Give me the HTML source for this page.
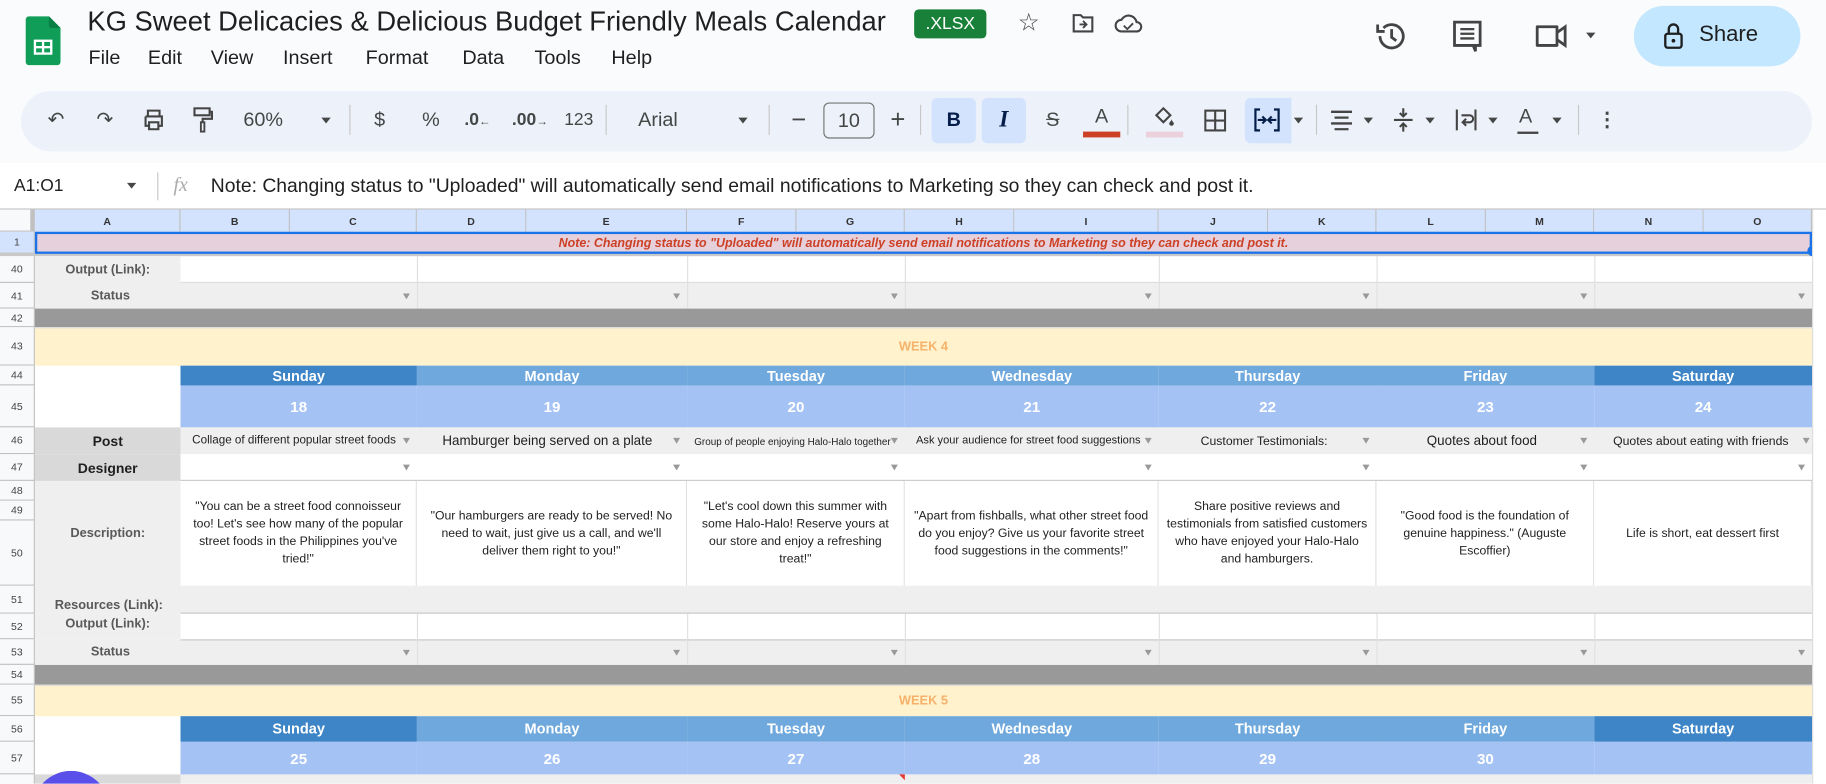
<!DOCTYPE html>
<html><head><meta charset="utf-8">
<style>
*{margin:0;padding:0;box-sizing:border-box}
html,body{width:1826px;height:784px;overflow:hidden;background:#f9fbfd}
#w{position:absolute;left:0;top:0;width:1568px;height:673px;overflow:hidden;transform:scale(1.16454);transform-origin:0 0;font-family:"Liberation Sans",Arial,sans-serif;color:#1f1f1f}
.a{position:absolute}
.t{position:absolute;white-space:nowrap}
.m{font-size:17px;top:40px}
.tb{position:absolute;top:103px;transform:translate(-50%,-50%);font-size:17px;color:#444746;white-space:nowrap}
.sep{position:absolute;top:90px;width:1px;height:26px;background:#c7c7c7}
.dd{position:absolute;width:0;height:0;border-left:4px solid transparent;border-right:4px solid transparent;border-top:5px solid #444746}
.rn{position:absolute;left:0;width:30px;font-size:9px;color:#444;text-align:center;border-bottom:1px solid #c0c0c0;border-right:1px solid #c0c0c0;background:#f8f9fa;display:flex;align-items:center;justify-content:center}
.ch{position:absolute;top:180px;height:19px;font-size:9px;font-weight:bold;color:#333;background:#d3e3fd;border-right:1px solid #c0c0c0;display:flex;align-items:center;justify-content:center}
.c{position:absolute;display:flex;align-items:center;justify-content:center;text-align:center;overflow:hidden}
.lab{font-size:11px;font-weight:bold;color:#595959;background:#efefef}
.ar{position:absolute;width:0;height:0;border-left:3px solid transparent;border-right:3px solid transparent;border-top:5px solid #999}
.day{color:#fff;font-weight:bold;font-size:12.5px}
.num{color:#fff;font-weight:bold;font-size:13px;background:#a4c2f4}
.desc{font-size:10.5px;line-height:15px;color:#222;background:#fff;padding:0 6px;border-right:1px solid #e0e0e0}
</style></head><body><div id="w">
<svg class="a" style="left:22px;top:14px" width="30" height="42" viewBox="0 0 30 42"><path d="M3 0h17l10 10v29a3 3 0 0 1-3 3H3a3 3 0 0 1-3-3V3a3 3 0 0 1 3-3z" fill="#0f9d58"/><path d="M20 0l10 10H22a2 2 0 0 1-2-2z" fill="#087f43"/><rect x="7" y="20" width="16" height="13" fill="#fff"/><rect x="9" y="22" width="5" height="3.5" fill="#0f9d58"/><rect x="16" y="22" width="5" height="3.5" fill="#0f9d58"/><rect x="9" y="27.5" width="5" height="3.5" fill="#0f9d58"/><rect x="16" y="27.5" width="5" height="3.5" fill="#0f9d58"/></svg>
<div class="t" style="left:75px;top:5px;font-size:23.5px;color:#1f1f1f">KG Sweet Delicacies &amp; Delicious Budget Friendly Meals Calendar</div>
<div class="a" style="left:785px;top:8px;width:62px;height:25px;background:#188038;border-radius:4px;color:#fff;font-size:15px;display:flex;align-items:center;justify-content:center">.XLSX</div>
<div class="t" style="left:874px;top:7px;font-size:21px;color:#444">☆</div>
<svg class="a" style="left:920px;top:11px" width="20" height="18" viewBox="0 0 20 18"><path d="M2 2h6l2 2h8v12H2z" fill="none" stroke="#444" stroke-width="1.8"/><path d="M7 10h6M10 7l3 3-3 3" fill="none" stroke="#444" stroke-width="1.6"/></svg>
<svg class="a" style="left:957px;top:11px" width="24" height="18" viewBox="0 0 24 18"><path d="M6 16a5 5 0 0 1 0-10 7 7 0 0 1 13 2 4 4 0 0 1 0 8z" fill="none" stroke="#444" stroke-width="1.8"/><path d="M8 11l3 3 5-5" fill="none" stroke="#444" stroke-width="1.6"/></svg>
<div class="t m" style="left:76px">File</div><div class="t m" style="left:127px">Edit</div><div class="t m" style="left:181px">View</div><div class="t m" style="left:243px">Insert</div><div class="t m" style="left:314px">Format</div><div class="t m" style="left:397px">Data</div><div class="t m" style="left:459px">Tools</div><div class="t m" style="left:525px">Help</div>
<svg class="a" style="left:1180px;top:16px" width="30" height="30" viewBox="0 0 30 30"><path d="M5 15a10 10 0 1 0 3-7" fill="none" stroke="#444" stroke-width="2.4"/><path d="M3 5v6h6" fill="none" stroke="#444" stroke-width="2.4"/><path d="M15 9v7l4 3" fill="none" stroke="#444" stroke-width="2.4"/></svg>
<svg class="a" style="left:1246px;top:16px" width="30" height="30" viewBox="0 0 30 30"><path d="M3 3h22v20h-4v5l-2-5H3z" fill="none" stroke="#444" stroke-width="2.4"/><path d="M8 9h12M8 13h12M8 17h12" stroke="#444" stroke-width="2"/></svg>
<svg class="a" style="left:1317px;top:18px" width="34" height="26" viewBox="0 0 34 26"><path d="M3 5h17v16H3z" fill="none" stroke="#444" stroke-width="2.4" stroke-linejoin="round"/><path d="M20 10l7-5v16l-7-5" fill="none" stroke="#444" stroke-width="2.4"/></svg>
<div class="dd" style="left:1362px;top:28px"></div>
<div class="a" style="left:1403px;top:5px;width:143px;height:52px;background:#c2e7ff;border-radius:26px"></div>
<svg class="a" style="left:1428px;top:19px" width="18" height="24" viewBox="0 0 18 24"><rect x="2" y="10" width="14" height="12" rx="2" fill="none" stroke="#1f1f1f" stroke-width="2"/><path d="M5 10V6a4 4 0 0 1 8 0v4" fill="none" stroke="#1f1f1f" stroke-width="2"/><circle cx="9" cy="16" r="1.6" fill="#1f1f1f"/></svg>
<div class="t" style="left:1459px;top:19px;font-size:19px;color:#1f1f1f">Share</div>
<div class="a" style="left:18px;top:78px;width:1538px;height:52px;background:#edf2fa;border-radius:26px"></div>
<div class="tb" style="left:48px">↶</div><div class="tb" style="left:90px">↷</div>
<svg class="a" style="left:122px;top:94px" width="20" height="18" viewBox="0 0 20 18"><path d="M5 6V1h10v5M3 6h14v8h-3M6 14H3V6" fill="none" stroke="#444" stroke-width="1.8"/><rect x="6" y="11" width="8" height="6" fill="none" stroke="#444" stroke-width="1.8"/></svg>
<svg class="a" style="left:165px;top:92px" width="18" height="22" viewBox="0 0 18 22"><rect x="2" y="1" width="13" height="6" fill="none" stroke="#444" stroke-width="1.8"/><path d="M15 4h2v6H9v3" fill="none" stroke="#444" stroke-width="1.8"/><rect x="7.5" y="13" width="3" height="8" fill="none" stroke="#444" stroke-width="1.6"/></svg>
<div class="tb" style="left:226px">60%</div><div class="dd" style="left:276px;top:101px"></div>
<div class="sep" style="left:300px"></div>
<div class="tb" style="left:326px">$</div><div class="tb" style="left:370px">%</div>
<div class="tb" style="left:410px;font-size:15px;font-weight:bold">.0<span style="font-size:10px">←</span></div>
<div class="tb" style="left:455px;font-size:15px;font-weight:bold">.00<span style="font-size:10px">→</span></div>
<div class="tb" style="left:497px;font-size:15px">123</div>
<div class="sep" style="left:520px"></div>
<div class="tb" style="left:565px">Arial</div><div class="dd" style="left:634px;top:101px"></div>
<div class="sep" style="left:660px"></div>
<div class="tb" style="left:686px;font-size:22px">−</div>
<div class="a" style="left:707px;top:88px;width:44px;height:31px;border:1px solid #747775;border-radius:5px;font-size:17px;display:flex;align-items:center;justify-content:center;color:#444">10</div>
<div class="tb" style="left:771px;font-size:22px">+</div>
<div class="sep" style="left:790px"></div>
<div class="a" style="left:800px;top:84px;width:38px;height:39px;background:#d3e3fd;border-radius:5px"></div>
<div class="tb" style="left:819px;font-weight:bold;color:#041e49">B</div>
<div class="a" style="left:843px;top:84px;width:38px;height:39px;background:#d3e3fd;border-radius:5px"></div>
<div class="tb" style="left:862px;font-style:italic;font-weight:bold;color:#041e49;font-family:'Liberation Serif',serif;font-size:20px">I</div>
<div class="tb" style="left:904px;text-decoration:line-through">S</div>
<div class="tb" style="left:946px;top:100px">A</div><div class="a" style="left:930px;top:113px;width:32px;height:5px;background:#cc4125"></div>
<div class="sep" style="left:968px"></div>
<svg class="a" style="left:989px;top:90px" width="22" height="20" viewBox="0 0 22 20"><path d="M4 9l6-6 6 6-6 6z" fill="none" stroke="#444" stroke-width="1.8"/><path d="M17 12c0 2-2 3-2 4a2 2 0 0 0 4 0c0-1-2-2-2-4z" fill="#444"/></svg>
<div class="a" style="left:984px;top:113px;width:32px;height:5px;background:#ead1dc"></div>
<svg class="a" style="left:1034px;top:94px" width="19" height="19" viewBox="0 0 19 19"><rect x="1" y="1" width="17" height="17" fill="none" stroke="#444" stroke-width="1.8"/><path d="M9.5 1v17M1 9.5h17" stroke="#444" stroke-width="1.8"/></svg>
<div class="a" style="left:1069px;top:84px;width:40px;height:39px;background:#d3e3fd;border-radius:5px 0 0 5px"></div>
<svg class="a" style="left:1077px;top:93px" width="22" height="20" viewBox="0 0 22 20"><path d="M5 1H1v18h4M17 1h4v18h-4" fill="none" stroke="#041e49" stroke-width="2"/><path d="M3 10h6M7 7l3 3-3 3M19 10h-6M15 7l-3 3 3 3" fill="none" stroke="#041e49" stroke-width="1.8"/></svg>
<div class="dd" style="left:1111px;top:101px"></div>
<div class="sep" style="left:1130px"></div>
<svg class="a" style="left:1142px;top:94px" width="20" height="18" viewBox="0 0 20 18"><path d="M1 2h18M4 7h12M1 12h18M4 17h12" stroke="#444" stroke-width="2"/></svg><div class="dd" style="left:1171px;top:101px"></div>
<svg class="a" style="left:1196px;top:92px" width="18" height="22" viewBox="0 0 18 22"><path d="M1 11h16M9 1v7M6 5l3 3 3-3M9 21v-7M6 17l3-3 3 3" fill="none" stroke="#444" stroke-width="1.8"/></svg><div class="dd" style="left:1224px;top:101px"></div>
<svg class="a" style="left:1249px;top:93px" width="20" height="20" viewBox="0 0 20 20"><path d="M2 1v18M18 1v18M6 6h7a3 3 0 0 1 0 6H8M10 9l-3 3 3 3" fill="none" stroke="#444" stroke-width="1.8"/></svg><div class="dd" style="left:1278px;top:101px"></div>
<div class="tb" style="left:1310px;top:100px">A</div><div class="a" style="left:1303px;top:113px;width:18px;height:2px;background:#444"></div><div class="dd" style="left:1333px;top:101px"></div>
<div class="sep" style="left:1355px"></div>
<div class="tb" style="left:1380px;font-weight:bold">⋮</div>
<div class="a" style="left:0;top:140px;width:1568px;height:40px;background:#fff"></div>
<div class="t" style="left:12px;top:151px;font-size:15px">A1:O1</div><div class="dd" style="left:109px;top:157px"></div>
<div class="a" style="left:135px;top:148px;width:1px;height:24px;background:#c7c7c7"></div>
<div class="t" style="left:149px;top:149px;font-size:17px;font-style:italic;color:#aaa;font-family:'Liberation Serif',serif">fx</div>
<div class="t" style="left:181px;top:150px;font-size:16.6px">Note: Changing status to "Uploaded" will automatically send email notifications to Marketing so they can check and post it.</div>
<div class="a" style="left:0;top:179px;width:1568px;height:494px;background:#fff;border-top:1px solid #c0c0c0"></div>
<div class="a" style="left:0;top:180px;width:30px;height:19px;background:#f8f9fa;border-right:4px solid #c0c0c0;border-bottom:1px solid #c0c0c0"></div>
<div class="ch" style="left:30px;width:125px">A</div><div class="ch" style="left:155px;width:94px">B</div><div class="ch" style="left:249px;width:109px">C</div><div class="ch" style="left:358px;width:94px">D</div><div class="ch" style="left:452px;width:138px">E</div><div class="ch" style="left:590px;width:94px">F</div><div class="ch" style="left:684px;width:93px">G</div><div class="ch" style="left:777px;width:94px">H</div><div class="ch" style="left:871px;width:124px">I</div><div class="ch" style="left:995px;width:94px">J</div><div class="ch" style="left:1089px;width:93px">K</div><div class="ch" style="left:1182px;width:94px">L</div><div class="ch" style="left:1276px;width:93px">M</div><div class="ch" style="left:1369px;width:94px">N</div><div class="ch" style="left:1463px;width:93px">O</div>
<div class="rn" style="top:199px;height:19px;background:#d3e3fd">1</div>
<div class="a" style="left:0;top:217px;width:1556px;height:3px;background:#c8c8c8"></div>
<div class="rn" style="top:220px;height:23px">40</div><div class="rn" style="top:243px;height:22px">41</div><div class="rn" style="top:265px;height:16px">42</div><div class="rn" style="top:281px;height:33px">43</div><div class="rn" style="top:314px;height:17px">44</div><div class="rn" style="top:331px;height:36px">45</div><div class="rn" style="top:367px;height:23px">46</div><div class="rn" style="top:390px;height:23px">47</div><div class="rn" style="top:413px;height:17px">48</div><div class="rn" style="top:430px;height:17px">49</div><div class="rn" style="top:447px;height:56px">50</div><div class="rn" style="top:503px;height:24px">51</div><div class="rn" style="top:527px;height:22px">52</div><div class="rn" style="top:549px;height:22px">53</div><div class="rn" style="top:571px;height:17px">54</div><div class="rn" style="top:588px;height:27px">55</div><div class="rn" style="top:615px;height:22px">56</div><div class="rn" style="top:637px;height:28px">57</div><div class="rn" style="top:665px;height:8px;border-bottom:none"></div>
<div class="c" style="left:30px;top:199px;width:1526px;height:19px;background:#e6d0dc;border:2px solid #1a73e8;color:#cc4125;font-size:10.7px;font-weight:bold;font-style:italic">Note: Changing status to "Uploaded" will automatically send email notifications to Marketing so they can check and post it.</div>
<div class="a" style="left:1552px;top:211px;width:9px;height:9px;border-radius:50%;background:#1a73e8"></div>
<div class="c lab" style="left:30px;top:220px;width:125px;height:23px">Output (Link):</div>
<div class="c lab" style="left:30px;top:243px;width:1526px;height:22px;justify-content:flex-start;padding-left:48px">Status</div>
<div class="a" style="left:155px;top:242px;width:1401px;height:1px;background:#ddd"></div>
<div class="a" style="left:30px;top:265px;width:1526px;height:16px;background:#999"></div>
<div class="c" style="left:30px;top:281px;width:1526px;height:33px;background:#fff2cc;color:#f6b26b;font-weight:bold;font-size:11px;border-top:1px solid #ddd">WEEK 4</div>
<div class="c day" style="left:155px;top:314px;width:203px;height:17px;background:#3d85c6">Sunday</div>
<div class="c day" style="left:358px;top:314px;width:232px;height:17px;background:#6fa8dc">Monday</div>
<div class="c day" style="left:590px;top:314px;width:187px;height:17px;background:#6fa8dc">Tuesday</div>
<div class="c day" style="left:777px;top:314px;width:218px;height:17px;background:#6fa8dc">Wednesday</div>
<div class="c day" style="left:995px;top:314px;width:187px;height:17px;background:#6fa8dc">Thursday</div>
<div class="c day" style="left:1182px;top:314px;width:187px;height:17px;background:#6fa8dc">Friday</div>
<div class="c day" style="left:1369px;top:314px;width:187px;height:17px;background:#3d85c6">Saturday</div>
<div class="c num" style="left:155px;top:331px;width:203px;height:36px">18</div>
<div class="c num" style="left:358px;top:331px;width:232px;height:36px">19</div>
<div class="c num" style="left:590px;top:331px;width:187px;height:36px">20</div>
<div class="c num" style="left:777px;top:331px;width:218px;height:36px">21</div>
<div class="c num" style="left:995px;top:331px;width:187px;height:36px">22</div>
<div class="c num" style="left:1182px;top:331px;width:187px;height:36px">23</div>
<div class="c num" style="left:1369px;top:331px;width:187px;height:36px">24</div>
<div class="c" style="left:30px;top:367px;width:125px;height:23px;background:#d9d9d9;font-weight:bold;font-size:12px">Post</div>
<div class="c" style="left:30px;top:390px;width:125px;height:23px;background:#d9d9d9;font-weight:bold;font-size:12px">Designer</div>
<div class="a" style="left:155px;top:367px;width:1401px;height:23px;background:#efefef"></div>
<div class="c" style="left:155px;top:367px;width:195px;height:23px;font-size:10px">Collage of different popular street foods</div>
<div class="c" style="left:358px;top:367px;width:224px;height:23px;font-size:11.5px">Hamburger being served on a plate</div>
<div class="c" style="left:590px;top:367px;width:181px;height:23px;font-size:8.5px">Group of people enjoying Halo-Halo together</div>
<div class="c" style="left:777px;top:367px;width:212px;height:23px;font-size:9.5px">Ask your audience for street food suggestions</div>
<div class="c" style="left:995px;top:367px;width:181px;height:23px;font-size:10.5px">Customer Testimonials:</div>
<div class="c" style="left:1182px;top:367px;width:181px;height:23px;font-size:11.5px">Quotes about food</div>
<div class="c" style="left:1369px;top:367px;width:183px;height:23px;font-size:10.5px">Quotes about eating with friends</div>
<div class="a" style="left:1562px;top:367px;border-left:6px solid transparent;border-top:6px solid #e53935"></div>
<div class="a" style="left:155px;top:412px;width:1401px;height:1px;background:#c8c8c8"></div>
<div class="c lab" style="left:30px;top:413px;width:125px;height:90px">Description:</div>
<div class="c desc" style="left:155px;top:413px;width:203px;height:90px">"You can be a street food connoisseur too! Let's see how many of the popular street foods in the Philippines you've tried!"</div>
<div class="c desc" style="left:358px;top:413px;width:232px;height:90px">"Our hamburgers are ready to be served! No need to wait, just give us a call, and we'll deliver them right to you!"</div>
<div class="c desc" style="left:590px;top:413px;width:187px;height:90px">"Let's cool down this summer with some Halo-Halo! Reserve yours at our store and enjoy a refreshing treat!"</div>
<div class="c desc" style="left:777px;top:413px;width:218px;height:90px">"Apart from fishballs, what other street food do you enjoy? Give us your favorite street food suggestions in the comments!"</div>
<div class="c desc" style="left:995px;top:413px;width:187px;height:90px">Share positive reviews and testimonials from satisfied customers who have enjoyed your Halo-Halo and hamburgers.</div>
<div class="c desc" style="left:1182px;top:413px;width:187px;height:90px">"Good food is the foundation of genuine happiness." (Auguste Escoffier)</div>
<div class="c desc" style="left:1369px;top:413px;width:187px;height:90px">Life is short, eat dessert first</div>
<div class="c lab" style="left:30px;top:503px;width:1526px;height:24px;justify-content:flex-start;padding-left:17px;align-items:flex-end;padding-bottom:1px">Resources (Link):</div>
<div class="c lab" style="left:30px;top:527px;width:125px;height:22px;align-items:flex-start;padding-top:3px">Output (Link):</div>
<div class="a" style="left:155px;top:526px;width:1401px;height:1px;background:#c8c8c8"></div>
<div class="c lab" style="left:30px;top:549px;width:1526px;height:22px;justify-content:flex-start;padding-left:48px">Status</div>
<div class="a" style="left:155px;top:549px;width:1401px;height:1px;background:#c8c8c8"></div>
<div class="a" style="left:30px;top:571px;width:1526px;height:17px;background:#999"></div>
<div class="c" style="left:30px;top:588px;width:1526px;height:27px;background:#fff2cc;color:#f6b26b;font-weight:bold;font-size:11px;border-top:1px solid #ddd">WEEK 5</div>
<div class="c day" style="left:155px;top:615px;width:203px;height:22px;background:#3d85c6">Sunday</div>
<div class="c day" style="left:358px;top:615px;width:232px;height:22px;background:#6fa8dc">Monday</div>
<div class="c day" style="left:590px;top:615px;width:187px;height:22px;background:#6fa8dc">Tuesday</div>
<div class="c day" style="left:777px;top:615px;width:218px;height:22px;background:#6fa8dc">Wednesday</div>
<div class="c day" style="left:995px;top:615px;width:187px;height:22px;background:#6fa8dc">Thursday</div>
<div class="c day" style="left:1182px;top:615px;width:187px;height:22px;background:#6fa8dc">Friday</div>
<div class="c day" style="left:1369px;top:615px;width:187px;height:22px;background:#3d85c6">Saturday</div>
<div class="c num" style="left:155px;top:637px;width:203px;height:28px">25</div>
<div class="c num" style="left:358px;top:637px;width:232px;height:28px">26</div>
<div class="c num" style="left:590px;top:637px;width:187px;height:28px">27</div>
<div class="c num" style="left:777px;top:637px;width:218px;height:28px">28</div>
<div class="c num" style="left:995px;top:637px;width:187px;height:28px">29</div>
<div class="c num" style="left:1182px;top:637px;width:187px;height:28px">30</div>
<div class="c num" style="left:1369px;top:637px;width:187px;height:28px"></div>
<div class="a" style="left:30px;top:665px;width:125px;height:8px;background:#d9d9d9"></div>
<div class="a" style="left:155px;top:665px;width:1401px;height:8px;background:#efefef"></div>
<div class="a" style="left:772px;top:665px;width:0;height:0;border-left:5px solid transparent;border-top:5px solid #e53935"></div>
<div class="a" style="left:28px;top:662px;width:66px;height:11px;overflow:hidden"><div style="width:66px;height:66px;border-radius:50%;background:#5b4fe9"></div></div>
<div class="a" style="left:358px;top:220px;width:1px;height:45px;background:#e0e0e0"></div><div class="a" style="left:590px;top:220px;width:1px;height:45px;background:#e0e0e0"></div><div class="a" style="left:777px;top:220px;width:1px;height:45px;background:#e0e0e0"></div><div class="a" style="left:995px;top:220px;width:1px;height:45px;background:#e0e0e0"></div><div class="a" style="left:1182px;top:220px;width:1px;height:45px;background:#e0e0e0"></div><div class="a" style="left:1369px;top:220px;width:1px;height:45px;background:#e0e0e0"></div>
<div class="a" style="left:358px;top:527px;width:1px;height:44px;background:#e0e0e0"></div><div class="a" style="left:590px;top:527px;width:1px;height:44px;background:#e0e0e0"></div><div class="a" style="left:777px;top:527px;width:1px;height:44px;background:#e0e0e0"></div><div class="a" style="left:995px;top:527px;width:1px;height:44px;background:#e0e0e0"></div><div class="a" style="left:1182px;top:527px;width:1px;height:44px;background:#e0e0e0"></div><div class="a" style="left:1369px;top:527px;width:1px;height:44px;background:#e0e0e0"></div>
<div class="ar" style="left:346px;top:252px"></div><div class="ar" style="left:578px;top:252px"></div><div class="ar" style="left:765px;top:252px"></div><div class="ar" style="left:983px;top:252px"></div><div class="ar" style="left:1170px;top:252px"></div><div class="ar" style="left:1357px;top:252px"></div><div class="ar" style="left:1544px;top:252px"></div>
<div class="ar" style="left:346px;top:376px"></div><div class="ar" style="left:578px;top:376px"></div><div class="ar" style="left:765px;top:376px"></div><div class="ar" style="left:983px;top:376px"></div><div class="ar" style="left:1170px;top:376px"></div><div class="ar" style="left:1357px;top:376px"></div><div class="ar" style="left:1548px;top:376px"></div>
<div class="ar" style="left:346px;top:399px"></div><div class="ar" style="left:578px;top:399px"></div><div class="ar" style="left:765px;top:399px"></div><div class="ar" style="left:983px;top:399px"></div><div class="ar" style="left:1170px;top:399px"></div><div class="ar" style="left:1357px;top:399px"></div><div class="ar" style="left:1544px;top:399px"></div>
<div class="ar" style="left:346px;top:558px"></div><div class="ar" style="left:578px;top:558px"></div><div class="ar" style="left:765px;top:558px"></div><div class="ar" style="left:983px;top:558px"></div><div class="ar" style="left:1170px;top:558px"></div><div class="ar" style="left:1357px;top:558px"></div><div class="ar" style="left:1544px;top:558px"></div>
<div class="a" style="left:1556px;top:180px;width:12px;height:493px;background:#fff;border-left:1px solid #ddd"></div>
</div></body></html>
